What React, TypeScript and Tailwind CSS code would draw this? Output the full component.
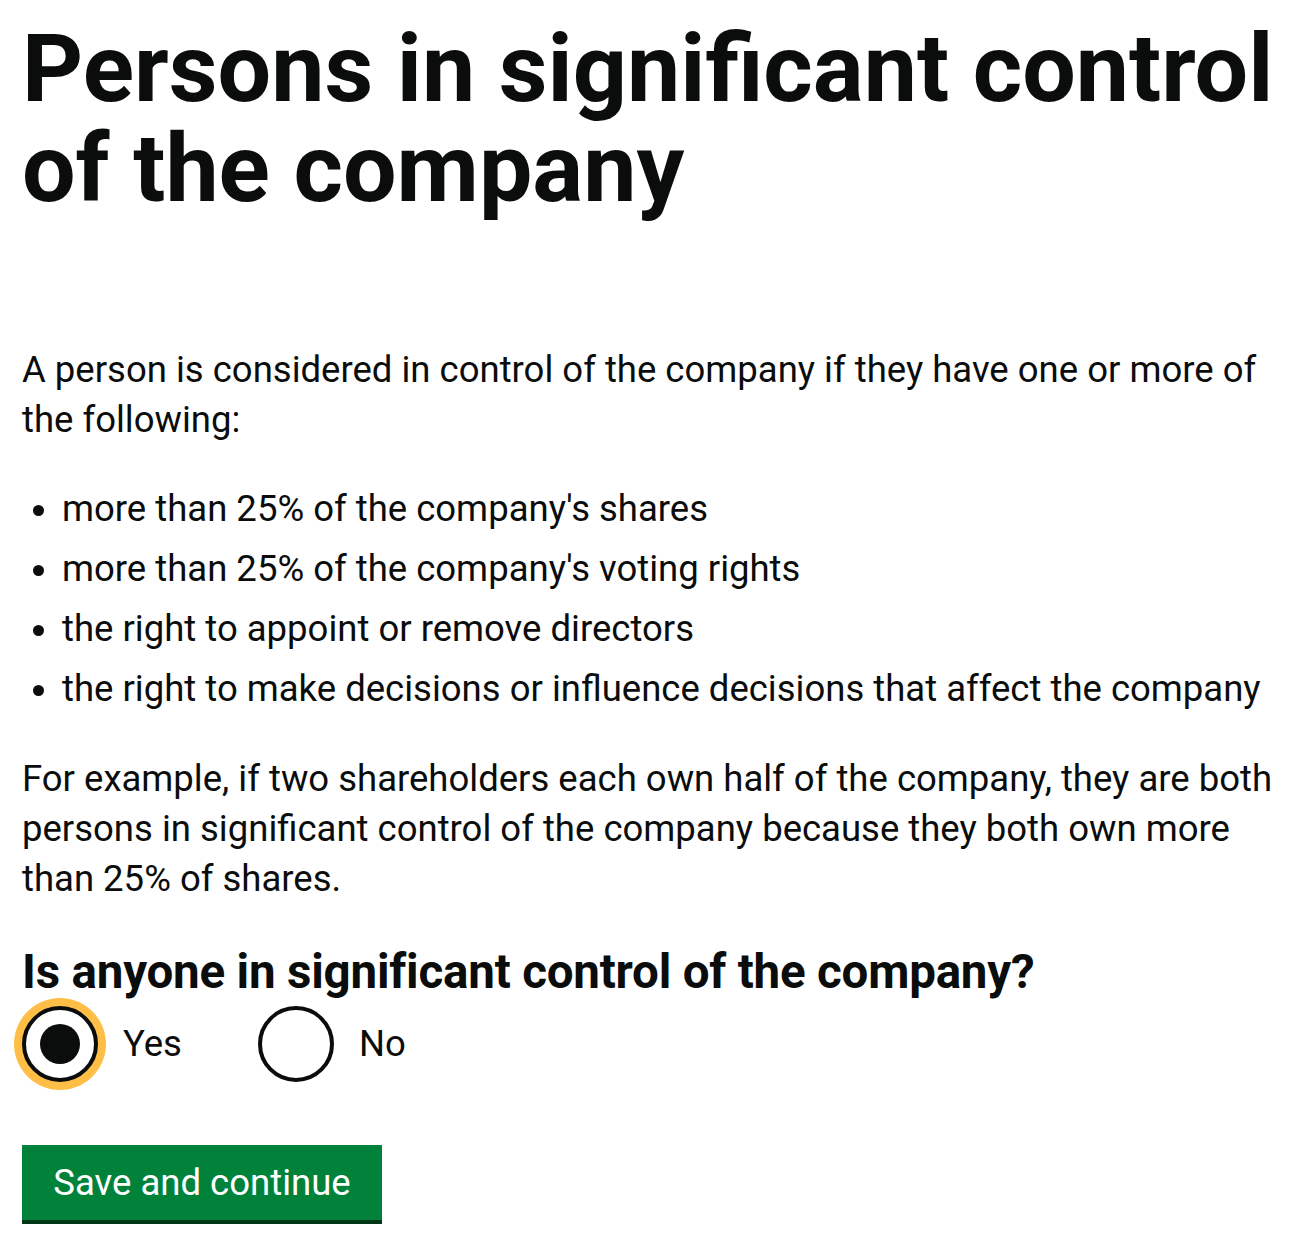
import React from "react";

function Radio({ label, checked }: { label: string; checked?: boolean }) {
  return (
    <label className="flex items-center gap-[25px] cursor-pointer">
      <span
        className={
          checked
            ? "flex h-[76px] w-[76px] shrink-0 items-center justify-center rounded-full border-[4px] border-[#0b0c0c] bg-white shadow-[0_0_0_8px_#ffbf47]"
            : "flex h-[76px] w-[76px] shrink-0 items-center justify-center rounded-full border-[4px] border-[#0b0c0c] bg-white"
        }
      >
        {checked && <span className="block h-[40px] w-[40px] rounded-full bg-[#0b0c0c]" />}
      </span>
      <span className="text-[36.5px] leading-[50px]">{label}</span>
    </label>
  );
}

export default function App() {
  const bullets = [
    "more than 25% of the company's shares",
    "more than 25% of the company's voting rights",
    "the right to appoint or remove directors",
    "the right to make decisions or influence decisions that affect the company",
  ];
  return (
    <div className="min-h-screen bg-white font-['Roboto',_'Liberation_Sans',_sans-serif] text-[#0b0c0c]">
      <main className="pl-[22px] pr-[10px] pt-[19px] pb-[30px]">
        <h1 className="text-[95px] font-bold leading-[100px]">
          Persons in significant control of the company
        </h1>

        <p className="mt-[126px] text-[36.5px] leading-[50px]">
          A person is considered in control of the company if they have one or more of the following:
        </p>

        <ul className="mt-[39px] list-disc pl-[40px] text-[36.5px] leading-[50px] marker:text-[#0b0c0c]">
          {bullets.map((b) => (
            <li key={b} className="mb-[10px]">
              {b}
            </li>
          ))}
        </ul>

        <p className="mt-[40px] text-[36.5px] leading-[50px]">
          For example, if two shareholders each own half of the company, they are both persons in significant
          control of the company because they both own more than 25% of shares.
        </p>

        <fieldset className="mt-[38px]">
          <legend className="text-[47.5px] font-bold leading-[60px] tracking-[-0.2px]">
            Is anyone in significant control of the company?
          </legend>
          <div className="mt-[4px] flex items-center gap-[76px]">
            <Radio label="Yes" checked />
            <Radio label="No" />
          </div>
        </fieldset>

        <button
          type="button"
          className="mt-[63px] flex h-[75px] w-[360px] items-center justify-center bg-[#00823b] text-[36.5px] leading-[50px] text-white shadow-[0_4px_0_#003618]"
        >
          Save and continue
        </button>
      </main>
    </div>
  );
}
